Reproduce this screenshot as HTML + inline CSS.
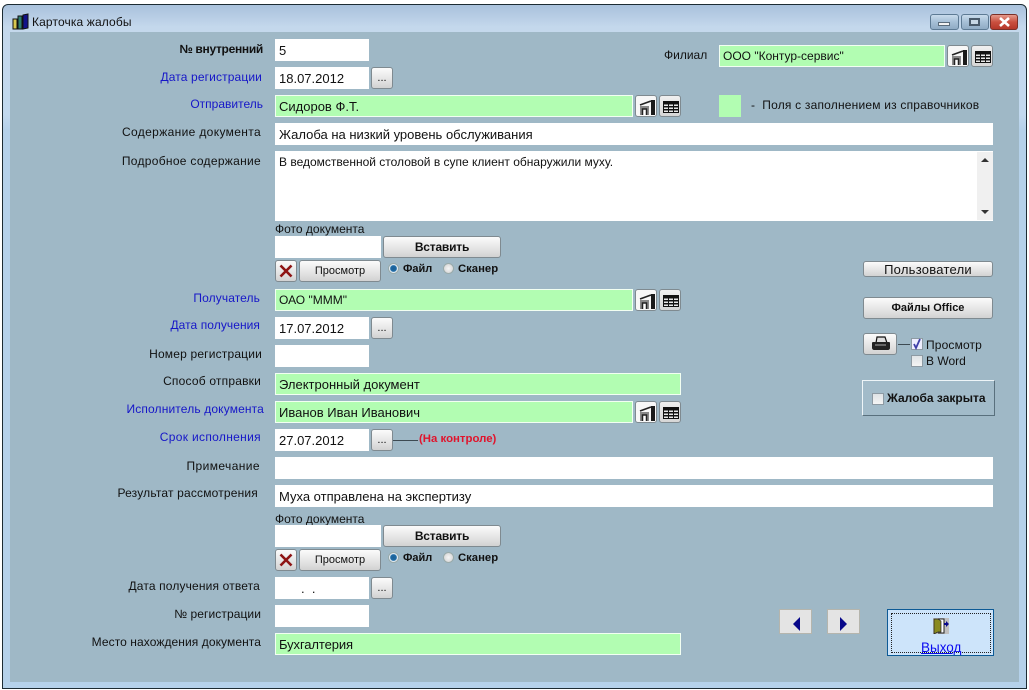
<!DOCTYPE html>
<html><head><meta charset="utf-8">
<style>
html,body{margin:0;padding:0;width:1029px;height:690px;overflow:hidden;background:#fff}
body{font-family:"Liberation Sans",sans-serif;font-size:12px;color:#111}
*{box-sizing:border-box}
.a,.l,.f,.g,.b,.i,.t{position:absolute}
#win{position:absolute;left:2px;top:4px;width:1025px;height:685px;border:1px solid #1c2b33;border-radius:6px 6px 0 0;background:linear-gradient(#a9c1dc 0,#c4d8ec 22px,#c2d9ef 110px,#b5d1ea 125px,#b5d1ea 100%)}
#client{position:absolute;left:10px;top:32px;width:1009px;height:650px;background:#9fb8c6}
.l{text-align:right;width:300px;height:14px;line-height:14px;white-space:nowrap}
.u{color:#1616c8}
.f{left:275px;height:22px;background:#fff;line-height:23px;padding-left:4px;white-space:nowrap;color:#111;font-size:13px}
.g{background:#b2fdb2;border:1px solid #f2fff2;padding-left:3px;line-height:21px}
.b{height:22px;border:1px solid #7f8a90;border-radius:3px;background:linear-gradient(#fbfbfb,#e9e9e9 45%,#d2d2d2);text-align:center;line-height:20px;color:#111}
.dots{left:371px;width:22px;font-size:11px;line-height:21px}
.i{width:22px;height:22px;border:1px solid #7f8a90;border-radius:3px;background:#f7f7f7}
.i.d{background:linear-gradient(#f0f0f0,#d6d6d6)}
.i svg{position:absolute;left:1px;top:1px}
.r{position:absolute;width:11px;height:11px;border-radius:50%;border:1px solid #9aa;background:radial-gradient(circle,#f5f5f5,#cfcfcf)}
.r.on{background:radial-gradient(circle,#1d5f95 0,#1d6aa5 45%,#e8f0f6 60%)}
.t{white-space:nowrap;line-height:13px}
.bold{font-weight:bold}
.ck{position:absolute;width:12px;height:12px;border:1px solid #8d9aa3;background:linear-gradient(#dfe3e6,#f4f4f4)}
.line{position:absolute;height:1px;background:#3d4a52}
.nav{position:absolute;top:609px;width:33px;height:25px;background:#e4e4e4;border:1px solid #b5b5ad}
.nav svg{position:absolute;top:7px}
.wb{position:absolute;top:14px;height:16px;border:1px solid #5d7a94;border-radius:3px;background:linear-gradient(#c9dbec,#a6bfd6 50%,#8fabc4)}
</style></head>
<body>
<div id="win"></div>
<div class="wb" style="left:930px;width:29px"><div class="a" style="left:7px;top:7px;width:12px;height:4px;background:#f2f2f2;border:1px solid #5a6b7a"></div></div>
<div class="wb" style="left:961px;width:28px"><div class="a" style="left:7px;top:3px;width:11px;height:8px;background:#c6d6e4;border:2px solid #48596a"></div></div>
<div class="wb" style="left:990px;width:28px;border-color:#7a3028;background:linear-gradient(#e59a8c,#c9503f 50%,#b5382a)"><svg class="a" style="left:7px;top:2px" width="13" height="10" viewBox="0 0 13 10"><path d="M2 1l9 8M11 1l-9 8" stroke="#fff" stroke-width="2.600" fill="none"/></svg></div>
<svg class="a" style="left:12px;top:13px" width="17" height="17" viewBox="0 0 17 17"><path d="M1 6h4v10H1z" fill="#d8c850" stroke="#111"/><path d="M6 3h4v13H6z" fill="#2f7f70" stroke="#111"/><path d="M11 2l5-1v14l-5 1z" fill="#12128a" stroke="#111"/></svg>
<div class="t" style="left:32px;top:16px;font-size:12px;letter-spacing:.13px">Карточка жалобы</div>
<div id="client"></div>

<div class="l bold" style="left:-37px;top:42px;letter-spacing:-.3px">№ внутренний</div>
<div class="l u" style="left:-38px;top:70px;letter-spacing:.13px">Дата регистрации</div>
<div class="l u" style="left:-37px;top:97px">Отправитель</div>
<div class="l" style="left:-39px;top:125px;letter-spacing:.35px">Содержание документа</div>
<div class="l" style="left:-39px;top:154px;letter-spacing:.3px">Подробное содержание</div>
<div class="l u" style="left:-40px;top:291px;letter-spacing:.1px">Получатель</div>
<div class="l u" style="left:-40px;top:318px;letter-spacing:.07px">Дата получения</div>
<div class="l" style="left:-38px;top:347px;letter-spacing:.18px">Номер регистрации</div>
<div class="l" style="left:-39px;top:374px;letter-spacing:.2px">Способ отправки</div>
<div class="l u" style="left:-36px;top:402px;letter-spacing:.14px">Исполнитель документа</div>
<div class="l u" style="left:-39px;top:430px;letter-spacing:.33px">Срок исполнения</div>
<div class="l" style="left:-40px;top:459px;letter-spacing:.4px">Примечание</div>
<div class="l" style="left:-42px;top:486px;letter-spacing:.18px">Результат рассмотрения</div>
<div class="l" style="left:-40px;top:579px;letter-spacing:.15px">Дата получения ответа</div>
<div class="l" style="left:-39px;top:607px;letter-spacing:.08px">№ регистрации</div>
<div class="l" style="left:-39px;top:635px;letter-spacing:.08px">Место нахождения документа</div>
<div class="t" style="left:664px;top:49px">Филиал</div>

<div class="f" style="top:39px;width:94px">5</div>
<div class="f" style="top:67px;width:94px">18.07.2012</div>
<div class="b dots" style="top:67px">...</div>
<div class="f g" style="top:95px;width:358px">Сидоров Ф.Т.</div>
<div class="f" style="top:123px;width:718px">Жалоба на низкий уровень обслуживания</div>
<div class="f" style="top:151px;width:718px;height:70px;line-height:22px;font-size:12px">В ведомственной столовой в супе клиент обнаружили муху.</div>
<div class="a" style="left:977px;top:152px;width:16px;height:68px;background:#f0f0f0"></div>
<div class="a" style="left:981px;top:158px;border-left:4px solid transparent;border-right:4px solid transparent;border-bottom:4px solid #333"></div>
<div class="a" style="left:981px;top:210px;border-left:4px solid transparent;border-right:4px solid transparent;border-top:4px solid #333"></div>
<div class="f g" style="left:719px;top:45px;width:226px;font-size:12px">ООО "Контур-сервис"</div>
<div class="a" style="left:719px;top:95px;width:22px;height:22px;background:#b2fdb2"></div>
<div class="t" style="left:751px;top:99px;letter-spacing:.2px">-&nbsp; Поля с заполнением из справочников</div>

<div class="t" style="left:275px;top:223px">Фото документа</div>
<div class="f" style="top:236px;width:106px"></div>
<div class="b bold" style="left:383px;top:236px;width:118px;line-height:21px;letter-spacing:-.2px">Вставить</div>
<div class="b" style="left:275px;top:260px;width:22px"><svg class="a" style="left:3px;top:3px" width="14" height="14" viewBox="0 0 14 14"><path d="M1.500 1.500l11 11M12.500 1.500l-11 11" stroke="#8e1414" stroke-width="2.600" fill="none"/></svg></div>
<div class="b" style="left:299px;top:260px;width:82px;font-size:11px;line-height:21px">Просмотр</div>
<div class="r on" style="left:388px;top:263px"></div>
<div class="t bold" style="left:403px;top:263px;font-size:11px">Файл</div>
<div class="r" style="left:443px;top:263px"></div>
<div class="t bold" style="left:458px;top:263px;font-size:11.300px">Сканер</div>

<div class="f g" style="top:289px;width:358px;font-size:12px">ОАО "МММ"</div>
<div class="f" style="top:317px;width:94px">17.07.2012</div>
<div class="b dots" style="top:317px">...</div>
<div class="f" style="top:345px;width:94px"></div>
<div class="f g" style="top:373px;width:406px">Электронный документ</div>
<div class="f g" style="top:401px;width:358px">Иванов Иван Иванович</div>
<div class="f" style="top:429px;width:94px">27.07.2012</div>
<div class="b dots" style="top:429px">...</div>
<div class="line" style="left:393px;top:440px;width:25px"></div>
<div class="t bold" style="left:419px;top:433px;font-size:11.400px;color:#e0142c">(На контроле)</div>
<div class="f" style="top:457px;width:718px"></div>
<div class="f" style="top:485px;width:718px">Муха отправлена на экспертизу</div>

<div class="t" style="left:275px;top:513px">Фото документа</div>
<div class="f" style="top:525px;width:106px"></div>
<div class="b bold" style="left:383px;top:525px;width:118px;line-height:21px;letter-spacing:-.2px">Вставить</div>
<div class="b" style="left:275px;top:549px;width:22px"><svg class="a" style="left:3px;top:3px" width="14" height="14" viewBox="0 0 14 14"><path d="M1.500 1.500l11 11M12.500 1.500l-11 11" stroke="#8e1414" stroke-width="2.600" fill="none"/></svg></div>
<div class="b" style="left:299px;top:549px;width:82px;font-size:11px;line-height:21px">Просмотр</div>
<div class="r on" style="left:388px;top:552px"></div>
<div class="t bold" style="left:403px;top:552px;font-size:11px">Файл</div>
<div class="r" style="left:443px;top:552px"></div>
<div class="t bold" style="left:458px;top:552px;font-size:11.300px">Сканер</div>

<div class="f" style="top:577px;width:94px;padding-left:26px">.&nbsp;&nbsp;.</div>
<div class="b dots" style="top:577px">...</div>
<div class="f" style="top:605px;width:94px"></div>
<div class="f g" style="top:633px;width:406px;font-size:13px;letter-spacing:-.1px;line-height:22px">Бухгалтерия</div>

<div class="i" style="left:635px;top:95px"><svg width="20" height="20" viewBox="0 0 20 20"><path d="M3 8L14 4" stroke="#222" stroke-width="1.600" fill="none"/><path d="M3 18V9h9v9z" fill="#888"/><path d="M5.500 18v-6h4v6" fill="#fff" stroke="#222" stroke-width="1.500"/><path d="M14 3h4v15h-4z" fill="#1a1a1a"/></svg></div>
<div class="i d" style="left:659px;top:95px"><svg width="20" height="20" viewBox="0 0 20 20"><rect x="2" y="4" width="16" height="12" fill="#111"/><path d="M3 7.500h4v1.500H3zM8 7.500h4v1.500H8zM13 7.500h4v1.500h-4zM3 10.500h4v1.500H3zM8 10.500h4v1.500H8zM13 10.500h4v1.500h-4zM3 13.500h4V15H3zM8 13.500h4V15H8zM13 13.500h4V15h-4z" fill="#e8e8e8"/></svg></div>
<div class="i" style="left:635px;top:289px"><svg width="20" height="20" viewBox="0 0 20 20"><path d="M3 8L14 4" stroke="#222" stroke-width="1.600" fill="none"/><path d="M3 18V9h9v9z" fill="#888"/><path d="M5.500 18v-6h4v6" fill="#fff" stroke="#222" stroke-width="1.500"/><path d="M14 3h4v15h-4z" fill="#1a1a1a"/></svg></div>
<div class="i d" style="left:659px;top:289px"><svg width="20" height="20" viewBox="0 0 20 20"><rect x="2" y="4" width="16" height="12" fill="#111"/><path d="M3 7.500h4v1.500H3zM8 7.500h4v1.500H8zM13 7.500h4v1.500h-4zM3 10.500h4v1.500H3zM8 10.500h4v1.500H8zM13 10.500h4v1.500h-4zM3 13.500h4V15H3zM8 13.500h4V15H8zM13 13.500h4V15h-4z" fill="#e8e8e8"/></svg></div>
<div class="i" style="left:635px;top:401px"><svg width="20" height="20" viewBox="0 0 20 20"><path d="M3 8L14 4" stroke="#222" stroke-width="1.600" fill="none"/><path d="M3 18V9h9v9z" fill="#888"/><path d="M5.500 18v-6h4v6" fill="#fff" stroke="#222" stroke-width="1.500"/><path d="M14 3h4v15h-4z" fill="#1a1a1a"/></svg></div>
<div class="i d" style="left:659px;top:401px"><svg width="20" height="20" viewBox="0 0 20 20"><rect x="2" y="4" width="16" height="12" fill="#111"/><path d="M3 7.500h4v1.500H3zM8 7.500h4v1.500H8zM13 7.500h4v1.500h-4zM3 10.500h4v1.500H3zM8 10.500h4v1.500H8zM13 10.500h4v1.500h-4zM3 13.500h4V15H3zM8 13.500h4V15H8zM13 13.500h4V15h-4z" fill="#e8e8e8"/></svg></div>
<div class="i" style="left:947px;top:45px"><svg width="20" height="20" viewBox="0 0 20 20"><path d="M3 8L14 4" stroke="#222" stroke-width="1.600" fill="none"/><path d="M3 18V9h9v9z" fill="#888"/><path d="M5.500 18v-6h4v6" fill="#fff" stroke="#222" stroke-width="1.500"/><path d="M14 3h4v15h-4z" fill="#1a1a1a"/></svg></div>
<div class="i d" style="left:971px;top:45px"><svg width="20" height="20" viewBox="0 0 20 20"><rect x="2" y="4" width="16" height="12" fill="#111"/><path d="M3 7.500h4v1.500H3zM8 7.500h4v1.500H8zM13 7.500h4v1.500h-4zM3 10.500h4v1.500H3zM8 10.500h4v1.500H8zM13 10.500h4v1.500h-4zM3 13.500h4V15H3zM8 13.500h4V15H8zM13 13.500h4V15h-4z" fill="#e8e8e8"/></svg></div>

<div class="b" style="left:863px;top:261px;width:130px;height:16px;line-height:15px;font-size:13px;letter-spacing:.25px">Пользователи</div>
<div class="b bold" style="left:863px;top:297px;width:130px;height:22px;font-size:11px;line-height:21px">Файлы Office</div>
<div class="b" style="left:863px;top:333px;width:34px;height:22px"><svg class="a" style="left:7px;top:2px" width="20" height="16" viewBox="0 0 20 16"><path d="M6 1h8l2 6H5z" fill="#ddd" stroke="#111" stroke-width="1.200"/><path d="M1 7c0-1 1-1 2-1h14c1 0 2 0 2 1v5c0 1-1 2-2 2H3c-1 0-2-1-2-2z" fill="#222"/><path d="M4 9h11" stroke="#aaa"/></svg></div>
<div class="line" style="left:898px;top:344px;width:12px"></div>
<div class="ck" style="left:911px;top:338px;background:#eef"><svg class="a" style="left:0;top:-1px" width="11" height="12" viewBox="0 0 11 12"><path d="M2 6l2 4 4-9" fill="none" stroke="#3f3fa8" stroke-width="1.800"/></svg></div>
<div class="t" style="left:926px;top:339px;letter-spacing:.15px">Просмотр</div>
<div class="ck" style="left:911px;top:355px"></div>
<div class="t" style="left:926px;top:355px">В Word</div>
<div class="a" style="left:862px;top:380px;width:133px;height:36px;background:#a2bbc9;border:1px solid;border-color:#eef5f8 #59707d #59707d #eef5f8"></div>
<div class="ck" style="left:872px;top:393px"></div>
<div class="t bold" style="left:887px;top:392px">Жалоба закрыта</div>

<div class="nav" style="left:779px"><svg style="left:13px" width="10" height="14" viewBox="0 0 10 14"><path d="M7 0v14L0 7z" fill="#08088a"/></svg></div>
<div class="nav" style="left:827px"><svg style="left:11px" width="10" height="14" viewBox="0 0 10 14"><path d="M1 0v14l7-7z" fill="#08088a"/></svg></div>
<div class="a" style="left:887px;top:609px;width:107px;height:47px;background:#cde4fa;border:1px solid #0d5a96">
  <div class="a" style="left:3px;top:3px;width:100px;height:40px;border:1px dotted #222"></div>
</div>
<svg class="a" style="left:933px;top:618px" width="16" height="16" viewBox="0 0 16 16"><rect width="16" height="16" fill="#c0c0c0"/><path d="M5 1h6v14H5" fill="#fff" stroke="#222"/><path d="M1 1h4l3 2v11H5l-4 2z" fill="#8a8a20" stroke="#222" stroke-width=".7"/><path d="M11 5h2V3l3 3-3 3V7h-2z" fill="#08088a"/></svg>
<div class="t" style="left:921px;top:641px;font-size:13.500px;color:#0a0af0;text-decoration:underline">Выход</div>
</body></html>
